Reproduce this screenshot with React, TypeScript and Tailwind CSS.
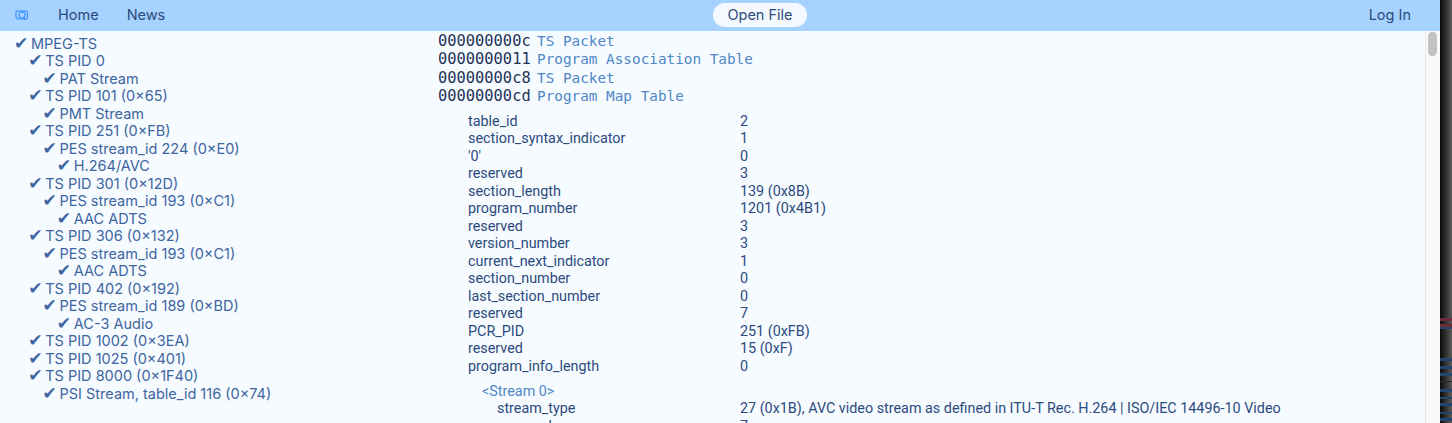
const tree: [number, string][] = [
  [0, "MPEG-TS"],
  [1, "TS PID 0"],
  [2, "PAT Stream"],
  [1, "TS PID 101 (0×65)"],
  [2, "PMT Stream"],
  [1, "TS PID 251 (0×FB)"],
  [2, "PES stream_id 224 (0×E0)"],
  [3, "H.264/AVC"],
  [1, "TS PID 301 (0×12D)"],
  [2, "PES stream_id 193 (0×C1)"],
  [3, "AAC ADTS"],
  [1, "TS PID 306 (0×132)"],
  [2, "PES stream_id 193 (0×C1)"],
  [3, "AAC ADTS"],
  [1, "TS PID 402 (0×192)"],
  [2, "PES stream_id 189 (0×BD)"],
  [3, "AC-3 Audio"],
  [1, "TS PID 1002 (0×3EA)"],
  [1, "TS PID 1025 (0×401)"],
  [1, "TS PID 8000 (0×1F40)"],
  [2, "PSI Stream, table_id 116 (0×74)"],
]

const packets = [
  ["000000000c", "TS Packet"],
  ["0000000011", "Program Association Table"],
  ["00000000c8", "TS Packet"],
  ["00000000cd", "Program Map Table"],
]

const fields = [
  ["table_id", "2"],
  ["section_syntax_indicator", "1"],
  ["'0'", "0"],
  ["reserved", "3"],
  ["section_length", "139 (0x8B)"],
  ["program_number", "1201 (0x4B1)"],
  ["reserved", "3"],
  ["version_number", "3"],
  ["current_next_indicator", "1"],
  ["section_number", "0"],
  ["last_section_number", "0"],
  ["reserved", "7"],
  ["PCR_PID", "251 (0xFB)"],
  ["reserved", "15 (0xF)"],
  ["program_info_length", "0"],
]

const streamFields = [
  ["stream_type", "27 (0x1B), AVC video stream as defined in ITU-T Rec. H.264 | ISO/IEC 14496-10 Video"],
  ["reserved", "7"],
]

const indent = ["pl-0", "pl-[14.2px]", "pl-[28.5px]", "pl-[42.8px]"]

// bands of the window behind the page
const bands = [
  "h-[3px] mt-[318px] bg-[#6e2b3a]",
  "h-[3px] mt-[3px] bg-[#6e2b3a]",
  "h-[2px] bg-[#23466f]",
  "h-[3px] mt-[29px] bg-[#23466f]",
  "h-[3px] mt-[5px] bg-[#23466f]",
  "h-[3px] mt-[4px] bg-[#23466f]",
  "h-[1px] mt-[5px] bg-[#2c2c2c]",
  "h-[3px] mt-[7px] bg-[#23466f]",
  "h-[2px] mt-[5px] bg-[#23466f]",
  "h-[3px] mt-[4px] bg-[#23466f]",
  "h-[2px] mt-[6px] bg-[#23466f]",
  "h-[3px] mt-[4px] bg-[#23466f]",
]

function Logo() {
  return (
    <svg width="14" height="11" viewBox="0 0 14 11" fill="none" stroke="#3d93ff" strokeWidth="1.2">
      <path d="M1.5 1.2h9.5a1.5 1.5 0 0 1 1.5 1.5v4.6a1.5 1.5 0 0 1-1.5 1.5H3.5A2.5 2.5 0 0 1 1 6.3V1.7z" />
      <circle cx="7" cy="5" r="3" />
      <path d="M9 7.5l1.8 2.4" />
    </svg>
  )
}

export default function App() {
  return (
    <div className="flex h-[423px] w-full overflow-hidden bg-[#f6fbff] font-['Inter',sans-serif] text-[14.5px] text-[#2b4a7d]">
      <div className="flex min-w-0 flex-1 flex-col">
        <header className="flex h-[31px] shrink-0 items-center bg-[#a5d2ff] pb-[1px] text-[#2d4a7c]">
          <div className="flex w-[713px] items-center pl-[15px]">
            <Logo />
            <a className="ml-[29px]">Home</a>
            <a className="ml-[28px]">News</a>
          </div>
          <button className="h-[24px] w-[94px] rounded-full bg-[#f3f9ff] text-[#2d4a7c]">Open File</button>
          <a className="ml-auto pr-[29px]">Log In</a>
        </header>

        <div className="flex min-h-0 flex-1">
          <main className="flex min-w-0 flex-1 overflow-hidden">
            <div className="w-[438px] shrink-0 pl-[14px] pt-[3.5px] text-[#3d659f]">
              {tree.map(([depth, label], i) => (
                <div key={i} className={`flex h-[17.5px] whitespace-nowrap leading-[17.5px] ${indent[depth]}`}>
                  <span className="w-[17px] shrink-0 font-['DejaVu_Sans',sans-serif] text-[17px]">✔</span>
                  {label}
                </div>
              ))}
            </div>

            <div className="min-w-0 flex-1 pt-[1px]">
              {packets.map(([offset, name]) => (
                <div key={offset} className="flex h-[18.3px] items-baseline whitespace-nowrap font-['DejaVu_Sans_Mono',monospace] leading-[18.3px]">
                  <span className="w-[99px] shrink-0 text-[15.4px] text-[#1f3358]">{offset}</span>
                  <span className="text-[14.35px] text-[#4f86c6]">{name}</span>
                </div>
              ))}

              <div className="pl-[30px] pt-[7.5px] font-['Roboto',sans-serif] text-[14.35px] text-[#2b4a7d]">
                {fields.map(([key, value], i) => (
                  <div key={i} className="flex h-[17.5px] leading-[17.5px]">
                    <span className="w-[272px] shrink-0">{key}</span>
                    <span>{value}</span>
                  </div>
                ))}
                <div className="pl-[14px] pt-[7.5px]">
                  <div className="h-[17.5px] leading-[17.5px] text-[#4f86c6]">{"<Stream 0>"}</div>
                  {streamFields.map(([key, value], i) => (
                    <div key={i} className="flex h-[17.5px] whitespace-nowrap pl-[15px] leading-[17.5px]">
                      <span className="w-[243px] shrink-0">{key}</span>
                      <span>{value}</span>
                    </div>
                  ))}
                </div>
              </div>
            </div>
          </main>

          <div className="w-[15px] shrink-0 border-l border-[#e6e6e6] bg-[#fafafa] pl-[2px] pt-[1px]">
            <div className="h-[24px] w-[9px] rounded-full bg-[#c2c2c2]" />
          </div>
        </div>
      </div>

      <div className="w-[12px] shrink-0 bg-gradient-to-r from-[#0c0c0c] to-[#5c5c5c]">
        {bands.map((cls, i) => (
          <div key={i} className={cls} />
        ))}
      </div>
    </div>
  )
}
